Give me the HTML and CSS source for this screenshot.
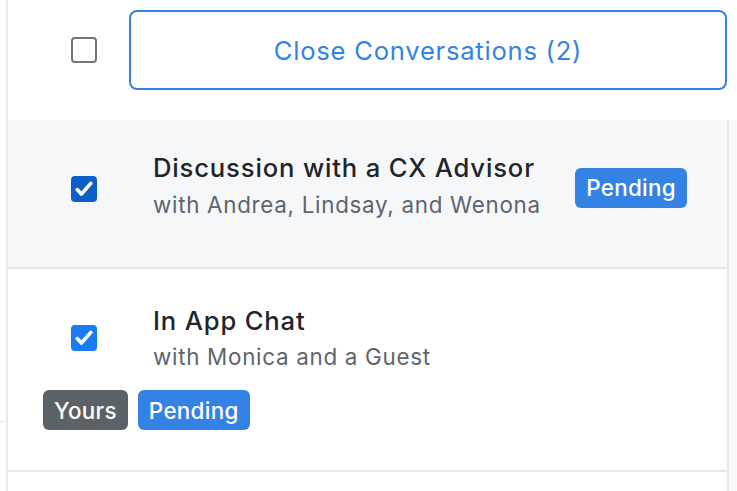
FILE: index.html
```html
<!DOCTYPE html>
<html lang="en">
<head>
  <meta charset="UTF-8" />
  <title>Conversations</title>
  <link rel="stylesheet" href="styles.css">
</head>
<body>
  <div class="page">
    <div class="side"></div>

    <div class="panel">
      <div class="toolbar">
        <span class="check"></span>
        <button class="close-btn">Close Conversations (2)</button>
      </div>

      <div class="list">
        <div class="row row-active">
          <div class="check-cell">
            <span class="check checked dark">
              <svg viewBox="0 0 26 26" width="26" height="26"><path d="M6.2 13.6 L10.4 18 L19.8 7.4" /></svg>
            </span>
          </div>
          <div class="info">
            <div class="title">Discussion with a CX Advisor</div>
            <div class="subtitle">with Andrea, Lindsay, and Wenona</div>
          </div>
          <div class="badges">
            <span class="badge badge-blue">Pending</span>
          </div>
        </div>

        <div class="row row-wrap">
          <div class="check-cell">
            <span class="check checked">
              <svg viewBox="0 0 26 26" width="26" height="26"><path d="M6.2 13.6 L10.4 18 L19.8 7.4" /></svg>
            </span>
          </div>
          <div class="info">
            <div class="title">In App Chat</div>
            <div class="subtitle">with Monica and a Guest</div>
          </div>
          <div class="badges">
            <span class="badge badge-gray">Yours</span>
            <span class="badge badge-blue">Pending</span>
          </div>
        </div>

        <div class="row row-empty"></div>
      </div>
    </div>
  </div>
</body>
</html>
```

FILE: styles.css
```css
body {
  margin: 0;
  background: #fff;
  font-family: Inter, "Noto Sans", sans-serif;
  color: #212529;
}

.page {
  display: flex;
  min-height: 491px;
}

.side {
  width: 6px;
  height: 421px;
  border-bottom: 1px solid #e6e7e9;
  flex-shrink: 0;
}

.panel {
  flex: 1;
  border-left: 2px solid #e8e9eb;
}

.toolbar {
  display: flex;
  align-items: center;
  gap: 32px;
  padding: 10px 10px 30px 63px;
}

.close-btn {
  flex: 1;
  height: 80px;
  background: #fff;
  border: 2px solid #3582e5;
  border-radius: 8px;
  color: #3582e5;
  font-family: Inter, "Noto Sans", sans-serif;
  font-size: 25.6px;
  letter-spacing: 0.75px;
  padding: 0;
}

.check {
  display: block;
  width: 22px;
  height: 22px;
  border: 2px solid #767676;
  border-radius: 4px;
  background: #fff;
  flex-shrink: 0;
}

.check.checked {
  width: 26px;
  height: 26px;
  border: none;
  background: #1a7cf2;
}

.check.dark {
  background: #0d5fc8;
}

.check svg {
  display: block;
}

.check path {
  fill: none;
  stroke: #fff;
  stroke-width: 3.6;
  stroke-linecap: round;
  stroke-linejoin: round;
}

.list {
  background: #f9f9fa;
  padding-right: 8px;
}

.row {
  display: flex;
  align-items: center;
  background: #fff;
  border-right: 2px solid #e6e7e9;
  border-bottom: 2px solid #e6e7e9;
  padding: 33px 40px 48px 35px;
}

.row-active {
  background: #f6f7f9;
}

.row-wrap {
  flex-wrap: wrap;
  padding: 37px 40px 40px 35px;
}

.row-wrap .badges {
  width: 100%;
  margin-top: 19px;
}

.row-empty {
  height: 40px;
  padding: 0;
}

.check-cell {
  width: 82px;
  padding-left: 28px;
}

.row-active .check-cell {
  padding-top: 6px;
}

.info {
  flex: 1;
}

.title {
  font-size: 25.6px;
  font-weight: 500;
  line-height: 1.2;
  letter-spacing: 0.85px;
  color: #212529;
}

.subtitle {
  margin-top: 8px;
  font-size: 22.4px;
  line-height: 1.2;
  letter-spacing: 0.7px;
  color: #5c656d;
}

.badges {
  display: flex;
  gap: 10px;
}

.row-active .badges {
  padding-top: 4px;
}

.badge {
  display: inline-flex;
  align-items: center;
  height: 40px;
  padding: 0 11px;
  border-radius: 6px;
  color: #fff;
  font-size: 22.4px;
  font-weight: 500;
  letter-spacing: 0.3px;
}

.badge-blue {
  background: #3582e5;
}

.badge-gray {
  background: #5b6267;
}
```
